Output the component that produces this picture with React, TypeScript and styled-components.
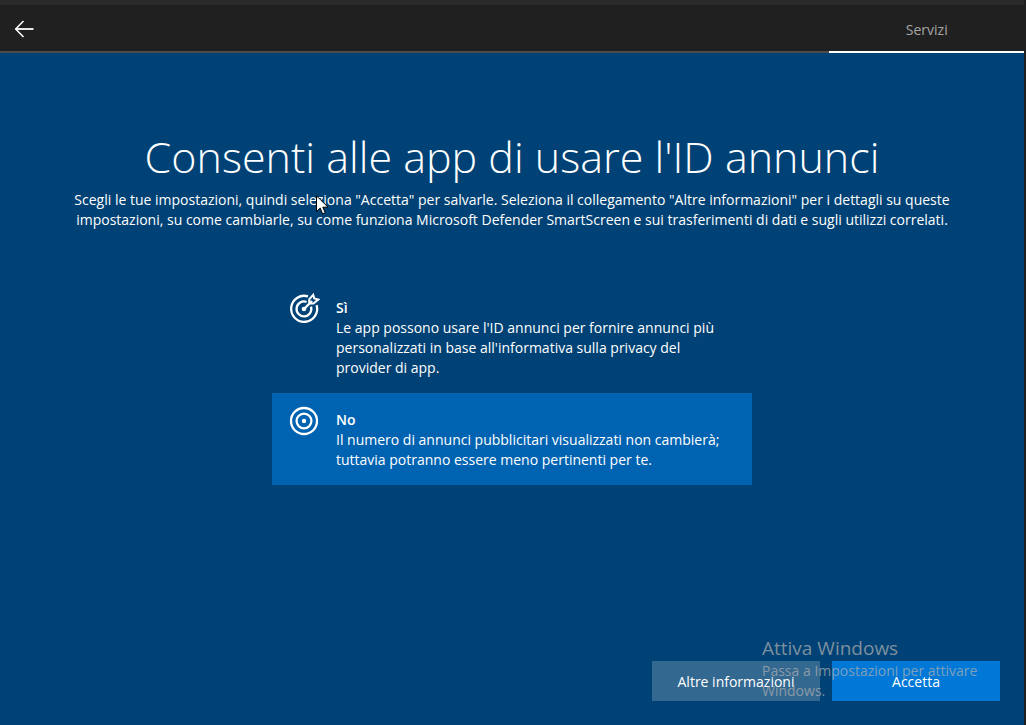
import React, { useState } from 'react';
import styled, { createGlobalStyle } from 'styled-components';

const GlobalStyle = createGlobalStyle`
  * { box-sizing: border-box; }
  body {
    margin: 0;
    background: #004275;
    color: #fff;
    font-family: 'Open Sans', 'Noto Sans', sans-serif;
    font-size: 14px;
    line-height: 20px;
  }
`;

const Screen = styled.div`
  position: relative;
  display: flex;
  flex-direction: column;
  min-height: 100vh;
  border-right: 2px solid #202020;
  background: #004275;
`;

const TopBar = styled.header`
  display: flex;
  justify-content: space-between;
  height: 53px;
  border-top: 5px solid #2a2a2a;
  background: linear-gradient(#4d4d4d, #4d4d4d) bottom / 100% 2px no-repeat #202020;
`;

const BackButton = styled.button`
  display: flex;
  align-items: center;
  justify-content: center;
  width: 48px;
  padding: 0;
  border: 0;
  background: transparent;
  color: #fff;
`;

const SectionTab = styled.a`
  display: flex;
  align-items: center;
  justify-content: center;
  width: 19%;
  padding-top: 4px;
  border-bottom: 2px solid #fff;
  color: #a6a6a6;
  text-decoration: none;
`;

const Main = styled.main`
  display: flex;
  flex: 1;
  flex-direction: column;
  align-items: center;
  padding: 76px 24px 24px;
`;

const Title = styled.h1`
  margin: 0 0 5px;
  font-size: 43px;
  font-weight: 300;
  line-height: 56px;
  text-align: center;
`;

const Intro = styled.p`
  margin: 0;
  text-align: center;
`;

const Options = styled.fieldset`
  width: 100%;
  max-width: 480px;
  margin: 51px 0 0;
  padding: 0;
  border: 0;
`;

const Option = styled.label<{ $selected: boolean }>`
  display: grid;
  grid-template-columns: 32px 1fr;
  gap: 16px;
  padding: 17px 16px 15px;
  background: ${(p) => (p.$selected ? '#0063b1' : 'transparent')};
`;

const HiddenRadio = styled.input`
  position: absolute;
  width: 1px;
  height: 1px;
  margin: 0;
  opacity: 0;
`;

const OptionName = styled.strong`
  display: block;
  font-weight: 600;
`;

const OptionIcon = styled.svg`
  width: 32px;
  height: 32px;
  margin-top: -5px;
`;

const Actions = styled.footer`
  display: flex;
  gap: 12px;
  margin-top: auto;
  align-self: flex-end;
`;

const Button = styled.button<{ $primary?: boolean }>`
  width: 168px;
  height: 40px;
  padding: 2px 0 0;
  border: 0;
  background: ${(p) => (p.$primary ? '#0078d7' : '#336891')};
  color: #fff;
  font: inherit;
`;

const Watermark = styled.aside`
  position: absolute;
  right: 32px;
  bottom: 24px;
  width: 230px;
  color: #b0b0b0;
  opacity: 0.7;
  pointer-events: none;
`;

const WatermarkTitle = styled.div`
  font-size: 19px;
  line-height: 26px;
`;

const Pointer = styled.svg`
  position: absolute;
  left: 316px;
  top: 195px;
  width: 13px;
  height: 20px;
  pointer-events: none;
`;

function TargetHit() {
  return (
    <OptionIcon viewBox="0 0 32 32" fill="none" stroke="#fff" aria-hidden="true">
      <path d="M20 3.4A13 13 0 1 0 28.6 12.1" strokeWidth="2.3" />
      <path d="M18.6 9A7.4 7.4 0 1 0 23 13.7" strokeWidth="2.3" />
      <path d="M16 16 24 8" strokeWidth="2.4" />
      <path d="M21.2 10.6V6.4L25.2 1.8L26.3 5.5L30.2 6.6L25.4 10.6Z" strokeWidth="2" />
      <circle cx="16" cy="16" r="2.3" fill="#fff" stroke="none" />
    </OptionIcon>
  );
}

function Target() {
  return (
    <OptionIcon viewBox="0 0 32 32" fill="none" stroke="#fff" strokeWidth="2.3" aria-hidden="true">
      <circle cx="16" cy="16" r="13" />
      <circle cx="16" cy="16" r="7.4" />
      <circle cx="16" cy="16" r="2.2" fill="#fff" stroke="none" />
    </OptionIcon>
  );
}

export default function App() {
  const [choice, setChoice] = useState('no');

  return (
    <>
      <GlobalStyle />
      <Screen>
        <TopBar>
          <BackButton type="button" aria-label="Indietro">
            <svg width="20" height="18" viewBox="0 0 20 18" fill="none" stroke="currentColor">
              <path d="M9.5 1 1.7 9l7.8 8" strokeWidth="1.5" />
              <path d="M1.7 9H19.5" strokeWidth="1.8" />
            </svg>
          </BackButton>
          <SectionTab href="#servizi">Servizi</SectionTab>
        </TopBar>
        <Main>
          <Title>Consenti alle app di usare l'ID annunci</Title>
          <Intro>
            Scegli le tue impostazioni, quindi seleziona "Accetta" per salvarle. Seleziona il collegamento "Altre informazioni" per i dettagli su queste
            <br />
            impostazioni, su come cambiarle, su come funziona Microsoft Defender SmartScreen e sui trasferimenti di dati e sugli utilizzi correlati.
          </Intro>
          <Options aria-label="ID annunci">
            <Option $selected={choice === 'si'}>
              <TargetHit />
              <span>
                <HiddenRadio type="radio" name="ads" checked={choice === 'si'} onChange={() => setChoice('si')} />
                <OptionName>Sì</OptionName>
                Le app possono usare l'ID annunci per fornire annunci più
                <br />
                personalizzati in base all'informativa sulla privacy del
                <br />
                provider di app.
              </span>
            </Option>
            <Option $selected={choice === 'no'}>
              <Target />
              <span>
                <HiddenRadio type="radio" name="ads" checked={choice === 'no'} onChange={() => setChoice('no')} />
                <OptionName>No</OptionName>
                Il numero di annunci pubblicitari visualizzati non cambierà;
                <br />
                tuttavia potranno essere meno pertinenti per te.
              </span>
            </Option>
          </Options>
          <Actions>
            <Button type="button">Altre informazioni</Button>
            <Button type="button" $primary>Accetta</Button>
          </Actions>
        </Main>
        <Watermark>
          <WatermarkTitle>Attiva Windows</WatermarkTitle>
          Passa a Impostazioni per attivare Windows.
        </Watermark>
        <Pointer viewBox="0 0 13 20" aria-hidden="true">
          <path d="M.5.8V16.6L4.2 13.1L6.6 18.8L9.2 17.7L6.8 12.2H12Z" fill="#fff" stroke="#000" />
        </Pointer>
      </Screen>
    </>
  );
}
